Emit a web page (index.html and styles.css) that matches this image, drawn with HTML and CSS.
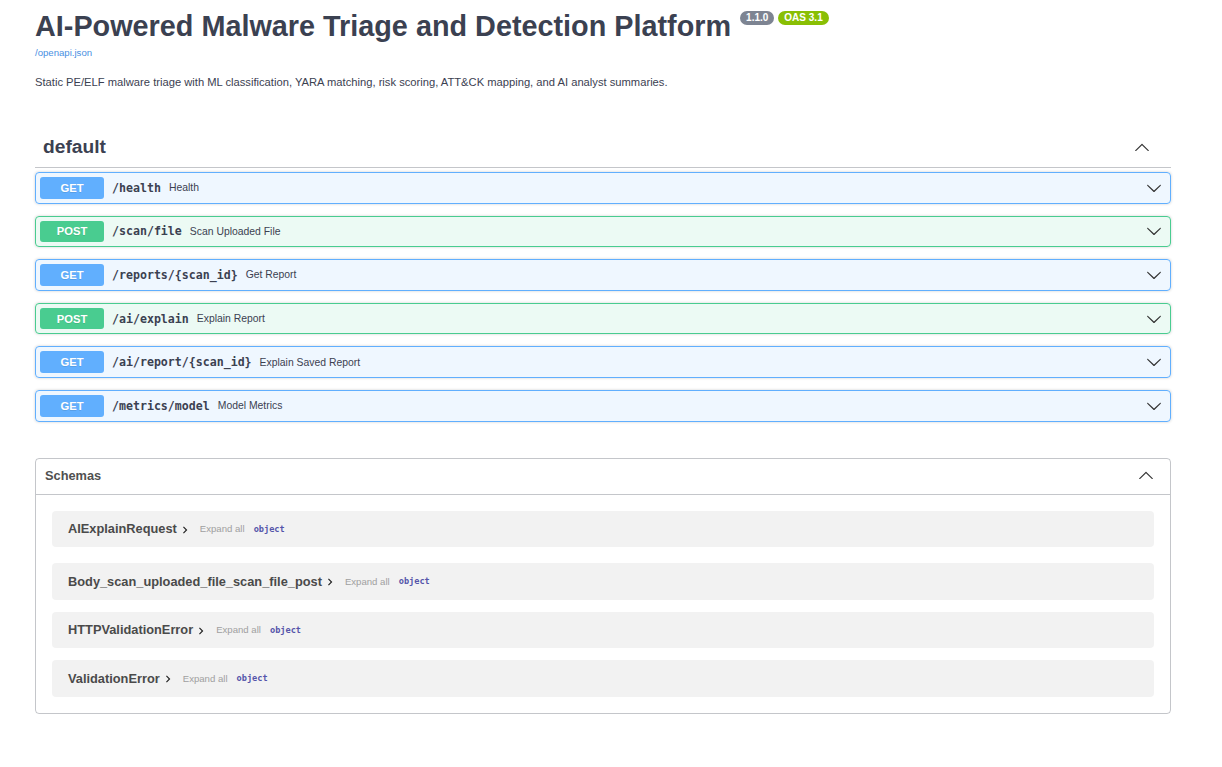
FILE: index.html
```html
<!DOCTYPE html>
<html lang="en">
<head>
  <meta charset="UTF-8" />
  <title>AI-Powered Malware Triage and Detection Platform - Swagger UI</title>
  <link rel="stylesheet" href="styles.css">
</head>
<body>
  <div class="wrapper">
    <div class="info">
      <h2 class="title">AI-Powered Malware Triage and Detection Platform
        <span class="badge">1.1.0</span><span class="badge version-stamp">OAS 3.1</span>
      </h2>
      <a class="spec-link" href="#">/openapi.json</a>
      <p class="description">Static PE/ELF malware triage with ML classification, YARA matching, risk scoring, ATT&amp;CK mapping, and AI analyst summaries.</p>
    </div>

    <div class="tag-section">
      <h3 class="opblock-tag">
        <span>default</span>
        <svg class="arrow" viewBox="0 0 20 20"><path d="M17.418 14.908c.272.268.709.268.979 0s.271-.701 0-.969l-7.908-7.83c-.27-.268-.707-.268-.979 0l-7.908 7.83c-.27.268-.27.701 0 .969.271.268.709.268.979 0L10 7.767l7.418 7.141z"/></svg>
      </h3>

      <div class="opblock get">
        <span class="method">GET</span>
        <span class="path">/health</span>
        <span class="summary">Health</span>
        <svg class="arrow" viewBox="0 0 20 20"><path d="M17.418 6.109c.272-.268.709-.268.979 0s.271.701 0 .969l-7.908 7.83c-.27.268-.707.268-.979 0l-7.908-7.830c-.27-.268-.27-.701 0-.969.271-.268.709-.268.979 0L10 13.25l7.418-7.141z"/></svg>
      </div>
      <div class="opblock post">
        <span class="method">POST</span>
        <span class="path">/scan/file</span>
        <span class="summary">Scan Uploaded File</span>
        <svg class="arrow" viewBox="0 0 20 20"><path d="M17.418 6.109c.272-.268.709-.268.979 0s.271.701 0 .969l-7.908 7.83c-.27.268-.707.268-.979 0l-7.908-7.83c-.27-.268-.27-.701 0-.969.271-.268.709-.268.979 0L10 13.25l7.418-7.141z"/></svg>
      </div>
      <div class="opblock get">
        <span class="method">GET</span>
        <span class="path">/reports/{scan_id}</span>
        <span class="summary">Get Report</span>
        <svg class="arrow" viewBox="0 0 20 20"><path d="M17.418 6.109c.272-.268.709-.268.979 0s.271.701 0 .969l-7.908 7.83c-.27.268-.707.268-.979 0l-7.908-7.83c-.27-.268-.27-.701 0-.969.271-.268.709-.268.979 0L10 13.25l7.418-7.141z"/></svg>
      </div>
      <div class="opblock post">
        <span class="method">POST</span>
        <span class="path">/ai/explain</span>
        <span class="summary">Explain Report</span>
        <svg class="arrow" viewBox="0 0 20 20"><path d="M17.418 6.109c.272-.268.709-.268.979 0s.271.701 0 .969l-7.908 7.83c-.27.268-.707.268-.979 0l-7.908-7.83c-.27-.268-.27-.701 0-.969.271-.268.709-.268.979 0L10 13.25l7.418-7.141z"/></svg>
      </div>
      <div class="opblock get">
        <span class="method">GET</span>
        <span class="path">/ai/report/{scan_id}</span>
        <span class="summary">Explain Saved Report</span>
        <svg class="arrow" viewBox="0 0 20 20"><path d="M17.418 6.109c.272-.268.709-.268.979 0s.271.701 0 .969l-7.908 7.83c-.27.268-.707.268-.979 0l-7.908-7.83c-.27-.268-.27-.701 0-.969.271-.268.709-.268.979 0L10 13.25l7.418-7.141z"/></svg>
      </div>
      <div class="opblock get">
        <span class="method">GET</span>
        <span class="path">/metrics/model</span>
        <span class="summary">Model Metrics</span>
        <svg class="arrow" viewBox="0 0 20 20"><path d="M17.418 6.109c.272-.268.709-.268.979 0s.271.701 0 .969l-7.908 7.83c-.27.268-.707.268-.979 0l-7.908-7.83c-.27-.268-.27-.701 0-.969.271-.268.709-.268.979 0L10 13.25l7.418-7.141z"/></svg>
      </div>
    </div>

    <section class="models">
      <h4>
        <span>Schemas</span>
        <svg class="arrow" viewBox="0 0 20 20"><path d="M17.418 14.908c.272.268.709.268.979 0s.271-.701 0-.969l-7.908-7.83c-.27-.268-.707-.268-.979 0l-7.908 7.83c-.27.268-.27.701 0 .969.271.268.709.268.979 0L10 7.767l7.418 7.141z"/></svg>
      </h4>
      <div class="model-list">
        <div class="model-container">
          <span class="model-title">AIExplainRequest</span>
          <svg class="toggle" viewBox="0 0 24 24"><path d="M10 6 8.59 7.41 13.17 12l-4.58 4.59L10 18l6-6z"/></svg>
          <span class="expand">Expand all</span>
          <span class="prop-type">object</span>
        </div>
        <div class="model-container">
          <span class="model-title">Body_scan_uploaded_file_scan_file_post</span>
          <svg class="toggle" viewBox="0 0 24 24"><path d="M10 6 8.59 7.41 13.17 12l-4.58 4.59L10 18l6-6z"/></svg>
          <span class="expand">Expand all</span>
          <span class="prop-type">object</span>
        </div>
        <div class="model-container">
          <span class="model-title">HTTPValidationError</span>
          <svg class="toggle" viewBox="0 0 24 24"><path d="M10 6 8.59 7.41 13.17 12l-4.58 4.59L10 18l6-6z"/></svg>
          <span class="expand">Expand all</span>
          <span class="prop-type">object</span>
        </div>
        <div class="model-container">
          <span class="model-title">ValidationError</span>
          <svg class="toggle" viewBox="0 0 24 24"><path d="M10 6 8.59 7.41 13.17 12l-4.58 4.59L10 18l6-6z"/></svg>
          <span class="expand">Expand all</span>
          <span class="prop-type">object</span>
        </div>
      </div>
    </section>
  </div>
</body>
</html>
```

FILE: styles.css
```css
* {
  box-sizing: border-box;
}

body {
  margin: 0;
  background: #fff;
  font-family: 'Liberation Sans', Arial, sans-serif;
  color: #3b4151;
}

.wrapper {
  padding: 0 51px 0 35px;
}

/* info block */

.info {
  padding-top: 10px;
  margin-bottom: 38px;
}

.title {
  margin: 0;
  font-size: 28.8px;
  line-height: 33px;
  font-weight: 700;
  color: #3b4151;
}

.badge {
  display: inline-block;
  position: relative;
  top: -10px;
  margin-left: 1px;
  padding: 0 6px;
  height: 14px;
  line-height: 14px;
  border-radius: 46px;
  background: #7d8492;
  color: #fff;
  font-size: 10px;
  font-weight: 700;
  vertical-align: middle;
}

.version-stamp {
  margin-left: 4px;
  background: #89bf04;
}

.spec-link {
  display: block;
  margin-top: 4px;
  font-size: 9.6px;
  line-height: 12px;
  color: #4990e2;
  text-decoration: none;
}

.description {
  margin: 16px 0 0;
  font-size: 11.2px;
  line-height: 14px;
}

/* operations */

.opblock-tag {
  display: flex;
  align-items: center;
  justify-content: space-between;
  margin: 0 0 4px;
  padding: 8px 21px 8px 8px;
  border-bottom: 1px solid rgba(59, 65, 81, 0.3);
  font-size: 19.2px;
  line-height: 24px;
  font-weight: 700;
}

.arrow {
  width: 16px;
  height: 16px;
  fill: #333;
}

.opblock {
  display: flex;
  align-items: center;
  margin-bottom: 12px;
  padding: 4px;
  border: 1px solid #000;
  border-radius: 4px;
  box-shadow: 0 0 3px rgba(0, 0, 0, 0.19);
}

.opblock.get {
  background: rgba(97, 175, 254, 0.1);
  border-color: #61affe;
}

.opblock.post {
  background: rgba(73, 204, 144, 0.1);
  border-color: #49cc90;
}

.method {
  min-width: 64px;
  padding: 4.8px 0;
  border-radius: 3px;
  font-size: 11.2px;
  line-height: 12px;
  font-weight: 700;
  color: #fff;
  text-align: center;
  text-shadow: 0 1px 0 rgba(0, 0, 0, 0.1);
}

.get .method {
  background: #61affe;
}

.post .method {
  background: #49cc90;
}

.path {
  padding: 0 8px;
  font-family: 'DejaVu Sans Mono', 'Liberation Mono', monospace;
  font-size: 11.6px;
  font-weight: 700;
  color: #3b4151;
}

.summary {
  flex: 1;
  font-size: 10.4px;
}

.opblock .arrow {
  margin-right: 4px;
}

/* schemas */

.models {
  margin-top: 36px;
  border: 1px solid rgba(59, 65, 81, 0.3);
  border-radius: 4px;
}

.models h4 {
  display: flex;
  align-items: center;
  justify-content: space-between;
  margin: 0;
  padding: 6px 16px 8px 9px;
  height: 36px;
  border-bottom: 1px solid rgba(59, 65, 81, 0.3);
  font-size: 12.8px;
  font-weight: 700;
  color: #505050;
}

.model-list {
  display: flex;
  flex-direction: column;
  gap: 12px;
  padding: 16px 16px 16px;
}

.model-container {
  display: flex;
  align-items: center;
  height: 36.5px;
  padding: 0 16px;
  border-radius: 4px;
  background: rgba(0, 0, 0, 0.05);
}

.model-container:first-child {
  margin-bottom: 4px;
}

.model-title {
  font-size: 12.8px;
  font-weight: 700;
  color: #4a4a4a;
}

.toggle {
  width: 14px;
  height: 14px;
  margin: 2px 8px 0 1px;
  fill: #222;
}

.expand {
  margin-right: 9px;
  font-size: 9.6px;
  color: #a0a0a0;
}

.prop-type {
  font-family: 'DejaVu Sans Mono', 'Liberation Mono', monospace;
  font-size: 8.6px;
  font-weight: 700;
  color: #55a;
}
```
